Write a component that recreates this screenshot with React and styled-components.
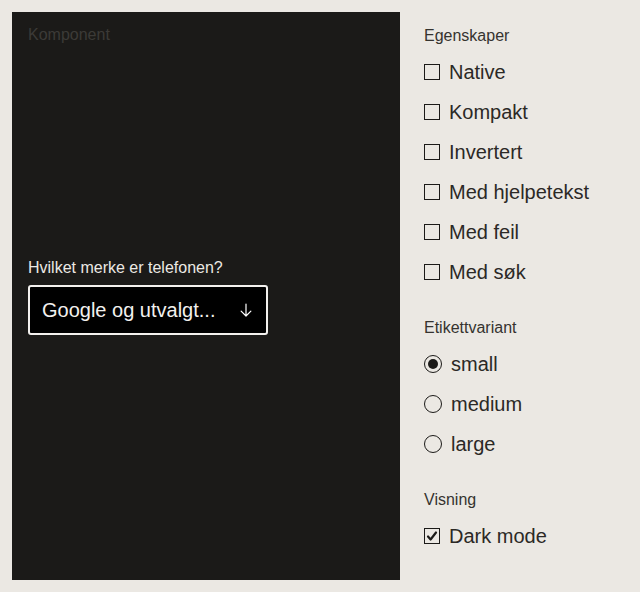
import React from 'react'
import styled, {createGlobalStyle} from 'styled-components'

const GlobalStyle = createGlobalStyle`
    body {
        margin: 0;
        background: #ebe8e3;
        font-family: "Liberation Sans", Arial, sans-serif;
    }
`

const checkboxes = ["Native", "Kompakt", "Invertert", "Med hjelpetekst", "Med feil", "Med søk"]
const variants = ["small", "medium", "large"]

const App = () => {
    return (
        <Page>
            <GlobalStyle/>
            <Preview>
                <PreviewTitle>Komponent</PreviewTitle>
                <Stage>
                    <Field>
                        <FieldLabel>Hvilket merke er telefonen?</FieldLabel>
                        <SelectBox>
                            <span>Google og utvalgt...</span>
                            <svg width="18" height="18" viewBox="0 0 24 24" fill="none" stroke="#fff" strokeWidth="1.6" strokeLinecap="round" strokeLinejoin="round">
                                <path d="M12 4v16M5.5 13.5 12 20l6.5-6.5"/>
                            </svg>
                        </SelectBox>
                    </Field>
                </Stage>
            </Preview>
            <Controls>
                <Group>
                    <GroupTitle>Egenskaper</GroupTitle>
                    {checkboxes.map(c => (
                        <Option key={c}>
                            <CheckBox/>
                            {c}
                        </Option>
                    ))}
                </Group>
                <Group>
                    <GroupTitle>Etikettvariant</GroupTitle>
                    {variants.map(v => (
                        <Option key={v}>
                            <Radio checked={v === "small"}/>
                            {v}
                        </Option>
                    ))}
                </Group>
                <Group>
                    <GroupTitle>Visning</GroupTitle>
                    <Option>
                        <CheckBox>
                            <svg width="14" height="14" viewBox="0 0 14 14" fill="none" stroke="#1b1a18" strokeWidth="2.2" strokeLinecap="round" strokeLinejoin="round">
                                <path d="M3 7.5l2.6 3L11 3.5"/>
                            </svg>
                        </CheckBox>
                        Dark mode
                    </Option>
                </Group>
            </Controls>
        </Page>
    )
}

const Page = styled.div`
    display: flex;
    padding: 12px;
    gap: 24px;
    height: 568px;
`
const Preview = styled.div`
    width: 388px;
    height: 568px;
    background: #1b1a18;
    padding: 16px;
    box-sizing: border-box;
    display: flex;
    flex-direction: column;
`
const PreviewTitle = styled.div`
    color: #3c3a37;
    font-size: 16px;
    line-height: 14px;
`
const Stage = styled.div`
    flex: 1;
    display: flex;
    align-items: center;
    padding-bottom: 12px;
`
const Field = styled.div`
    display: flex;
    flex-direction: column;
    gap: 8px;
`
const FieldLabel = styled.div`
    color: #ece9e4;
    font-size: 16px;
`
const SelectBox = styled.div`
    width: 240px;
    height: 50px;
    box-sizing: border-box;
    border: 2px solid #f3f1ee;
    border-radius: 3px;
    background: #000;
    color: #f3f1ee;
    font-size: 20px;
    display: flex;
    align-items: center;
    justify-content: space-between;
    padding: 0 11px 0 12px;
`
const Controls = styled.div`
    display: flex;
    flex-direction: column;
    gap: 25px;
    padding-top: 13px;
`
const Group = styled.div`
    display: flex;
    flex-direction: column;
`
const GroupTitle = styled.div`
    color: #35332f;
    font-size: 16px;
    line-height: 22px;
    margin-bottom: 5px;
`
const Option = styled.div`
    display: flex;
    align-items: center;
    gap: 9px;
    height: 40px;
    font-size: 20px;
    color: #2b2926;
`
const CheckBox = styled.div`
    width: 16px;
    height: 16px;
    border: 1.5px solid #1b1a18;
    box-sizing: border-box;
    display: flex;
    align-items: center;
    justify-content: center;
`
const Radio = styled.div`
    width: 18px;
    height: 18px;
    border-radius: 50%;
    border: 1.5px solid #1b1a18;
    box-sizing: border-box;
    display: flex;
    align-items: center;
    justify-content: center;
    &::after {
        content: "";
        width: 10px;
        height: 10px;
        border-radius: 50%;
        background: ${p => p.checked ? "#1b1a18" : "transparent"};
    }
`

export default App
